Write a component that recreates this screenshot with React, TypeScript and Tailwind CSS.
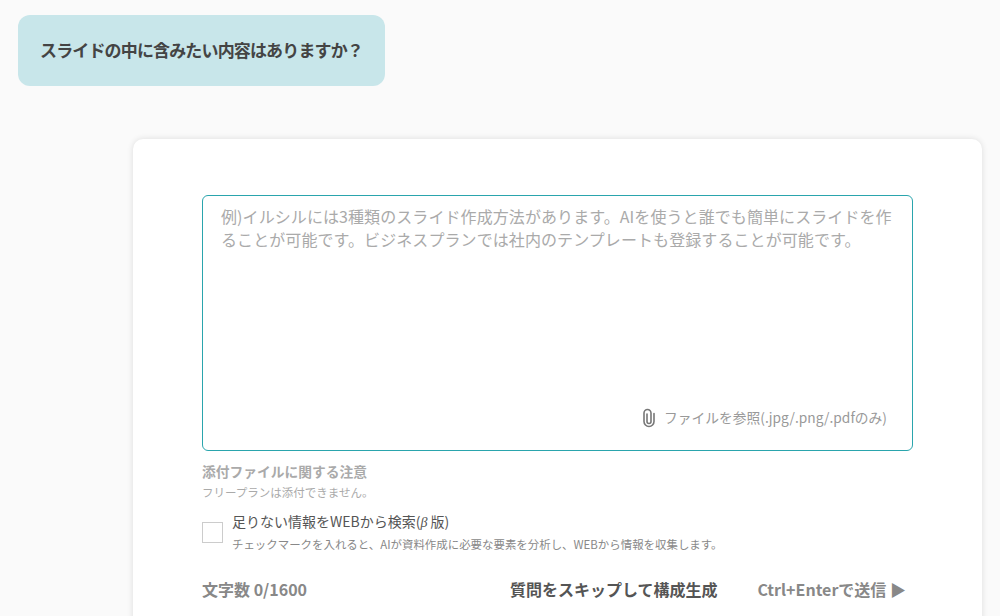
export default function App() {
  return (
    <div className="h-[616px] overflow-hidden bg-[#fafafa] font-['Noto_Sans_CJK_JP','Noto_Sans',sans-serif] text-[#555]">
      <div className="pl-[18px] pt-[15px]">
        <div className="flex h-[71px] w-[367px] items-center rounded-[12px] bg-[#c8e6ea] pl-[22px] pb-[2px]">
          <span className="text-[17px] font-bold tracking-[-0.85px] text-[#444]">スライドの中に含みたい内容はありますか？</span>
        </div>
      </div>
      <div className="ml-[133px] mt-[53px] h-[600px] w-[849px] rounded-[10px] bg-white pl-[69px] pr-[69px] pt-[56px] shadow-[0_0_6px_rgba(0,0,0,0.12)]">
        <div className="flex h-[256px] flex-col justify-between rounded-[6px] border border-[#2aa5ad] px-[18px] pb-[22px] pt-[9px]">
          <p className="text-[16px] leading-[23px] tracking-[0.08px] text-[#aaa]">
            例)イルシルには3種類のスライド作成方法があります。AIを使うと誰でも簡単にスライドを作ることが可能です。ビジネスプランでは社内のテンプレートも登録することが可能です。
          </p>
          <div className="flex items-center justify-end gap-[8px] pr-[7px] text-[13.75px] text-[#999]">
            <svg width="14" height="20" viewBox="0 0 14 20" fill="none" stroke="#777" strokeWidth="1.6" strokeLinecap="round">
              <path d="M12 5.5V13.5a5 5 0 0 1-10 0V5a3.5 3.5 0 0 1 7 0V13.5a2 2 0 0 1-4 0V6" />
            </svg>
            <span>ファイルを参照(.jpg/.png/.pdfのみ)</span>
          </div>
        </div>
        <p className="mt-[10px] text-[13.75px] font-bold leading-[20px] text-[#aaa]">添付ファイルに関する注意</p>
        <p className="mt-[3px] text-[11.5px] leading-[16px] text-[#aaa]">フリープランは添付できません。</p>
        <div className="mt-[11px] flex items-center gap-[9px]">
          <div className="mt-[2px] h-[21px] w-[21px] border border-[#ccc] bg-white" />
          <div>
            <p className="text-[14px] leading-[20px] text-[#555]">
              足りない情報をWEBから検索(<i className="pr-[3px] font-['Liberation_Serif',serif]">β</i>版)
            </p>
            <p className="mt-[3px] text-[11.45px] leading-[16px] text-[#888]">チェックマークを入れると、AIが資料作成に必要な要素を分析し、WEBから情報を収集します。</p>
          </div>
        </div>
        <div className="mt-[25px] flex items-center justify-between pr-[7px]">
          <span className="text-[16px] font-bold text-[#888]">文字数 0/1600</span>
          <div className="flex items-center gap-[40px]">
            <span className="text-[16px] font-bold text-[#555]">質問をスキップして構成生成</span>
            <span className="text-[16px] font-bold text-[#888]">Ctrl+Enterで送信 ▶</span>
          </div>
        </div>
      </div>
    </div>
  );
}
